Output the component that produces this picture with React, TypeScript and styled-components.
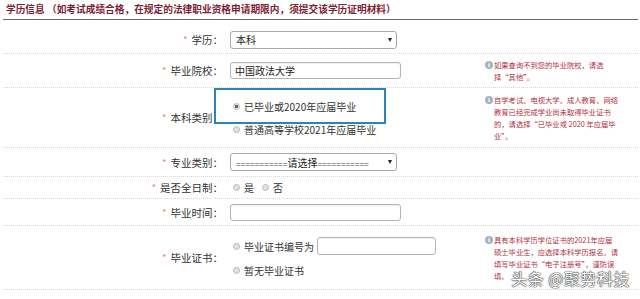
import React from 'react';
import styled, { createGlobalStyle } from 'styled-components';

const GlobalStyle = createGlobalStyle`
  html, body {
    margin: 0;
    padding: 0;
    background: #ffffff;
  }
  body {
    font-family: "Noto Sans CJK SC", "DejaVu Sans", sans-serif;
    color: #333;
  }
`;

const Page = styled.div`
  position: relative;
  width: 640px;
  height: 299px;
  overflow: hidden;
  padding: 0 2px 0 3px;
  box-sizing: border-box;
`;

const Header = styled.div`
  height: 19px;
  border-bottom: 1px solid #6a6a6a;
  padding-left: 3px;
  font-family: "Noto Sans CJK SC", sans-serif;
  font-size: 9.7px;
  font-weight: bold;
  line-height: 19px;
  color: #7b1d34;
  white-space: nowrap;
`;

const Form = styled.div`
  margin-top: 6px;
`;

const Row = styled.div<{ $h: number }>`
  position: relative;
  display: grid;
  grid-template-columns: 220px 245px 1fr;
  grid-template-rows: ${(p) => p.$h - 1}px;
  column-gap: 7px;
  align-items: center;
  height: ${(p) => p.$h}px;
  border-bottom: 1px dotted #d6d6d6;
  box-sizing: border-box;
`;

const Label = styled.div`
  text-align: right;
  font-family: "Noto Sans CJK SC", sans-serif;
  font-size: 10.5px;
  color: #333;
  white-space: nowrap;
`;

const Star = styled.span`
  color: #e58080;
  font-size: 9px;
  margin-right: 4px;
  vertical-align: 1px;
`;

const Field = styled.div`
  display: flex;
  flex-direction: column;
  gap: 8px;
`;

const FakeSelect = styled.div`
  display: flex;
  align-items: center;
  justify-content: space-between;
  width: 167px;
  height: 18px;
  box-sizing: border-box;
  border: 1px solid #a8a8a8;
  border-radius: 3px;
  padding: 0 4px 0 5px;
  font-family: "Noto Sans CJK SC", sans-serif;
  font-size: 10px;
  color: #222;
  background: #fff;
  white-space: nowrap;
`;

const Dashes = styled.span`
  font-family: "Liberation Sans", sans-serif;
  font-size: 8px;
  color: #444;
`;

const Arrow = styled.span`
  width: 0;
  height: 0;
  border-left: 2.5px solid transparent;
  border-right: 2.5px solid transparent;
  border-top: 4px solid #222;
`;

const TextInput = styled.div<{ $w: number; $h?: number }>`
  width: ${(p) => p.$w}px;
  height: ${(p) => p.$h ?? 17}px;
  box-sizing: border-box;
  border: 1px solid #b4b4b4;
  border-radius: 3px;
  box-shadow: inset 0 1px 1px rgba(0, 0, 0, 0.06);
  padding-left: 4px;
  font-family: "Noto Sans CJK SC", sans-serif;
  font-size: 10px;
  line-height: 15px;
  color: #222;
  background: #fff;
`;

const Option = styled.label<{ $front?: boolean }>`
  position: relative;
  z-index: ${(p) => (p.$front ? 2 : 0)};
  display: flex;
  align-items: center;
  gap: 2px;
  padding-left: 3px;
  font-family: "Noto Sans CJK SC", sans-serif;
  font-size: 10px;
  color: #333;
  white-space: nowrap;
`;

const Radio = styled.span<{ $on?: boolean }>`
  display: inline-block;
  width: 7px;
  height: 7px;
  border-radius: 50%;
  box-sizing: border-box;
  border: 1px solid #b9b9b9;
  background: ${(p) => (p.$on ? 'radial-gradient(circle, #666 0 1.5px, #e6e6e6 2px)' : '#e2e2e2')};
  margin-right: 2px;
`;

const Inline = styled.div<{ $gap: number }>`
  display: flex;
  align-items: center;
  gap: ${(p) => p.$gap}px;
`;

const Note = styled.div`
  display: flex;
  align-items: flex-start;
  gap: 1px;
  margin-left: 3px;
  font-family: "Noto Sans CJK SC", sans-serif;
  font-size: 7.3px;
  line-height: 12px;
  color: #b0303f;
  white-space: pre;
`;

const InfoIcon = styled.span`
  flex: none;
  width: 8px;
  height: 8px;
  margin-top: 2px;
  border-radius: 50%;
  background: #9fb3c6;
  color: #fff;
  font-size: 6px;
  font-weight: bold;
  line-height: 8px;
  text-align: center;
  font-family: "DejaVu Serif", serif;
`;

const Highlight = styled.div`
  position: absolute;
  z-index: 1;
  left: 211px;
  top: 0;
  width: 172px;
  height: 36px;
  border: 2px solid #2f82b6;
  background: #fff;
  box-sizing: border-box;
`;

const Watermark = styled.div`
  position: absolute;
  right: 10px;
  bottom: 9px;
  font-family: "Noto Sans CJK SC", sans-serif;
  font-size: 16px;
  color: #fff;
  text-shadow: 0 0 1px #222, 0 0 1px #222, 0 0 2px rgba(0, 0, 0, 0.5);
  letter-spacing: 0.5px;
`;

const Tip: React.FC<{ text: string }> = ({ text }) => (
  <Note>
    <InfoIcon>i</InfoIcon>
    <span>{text}</span>
  </Note>
);

const Req: React.FC<{ text: string }> = ({ text }) => (
  <Label>
    <Star>*</Star>
    {text}
  </Label>
);

export default function App() {
  return (
    <Page>
      <GlobalStyle />
      <Header>学历信息 （如考试成绩合格，在规定的法律职业资格申请期限内，须提交该学历证明材料）</Header>
      <Form>
        <Row $h={28}>
          <Req text="学历：" />
          <Field>
            <FakeSelect>
              <span>本科</span>
              <Arrow />
            </FakeSelect>
          </Field>
          <div />
        </Row>
        <Row $h={34}>
          <Req text="毕业院校：" />
          <Field>
            <TextInput $w={171}>中国政法大学</TextInput>
          </Field>
          <Tip text={'如果查询不到您的毕业院校，请选\n择“其他”。'} />
        </Row>
        <Row $h={60}>
          <Req text="本科类别：" />
          <Field>
            <Option $front>
              <Radio $on />
              已毕业或2020年应届毕业
            </Option>
            <Option>
              <Radio />
              普通高等学校2021年应届毕业
            </Option>
          </Field>
          <Tip text={'自学考试、电视大学、成人教育、网络\n教育已经完成学业尚未取得毕业证书\n的，请选择“已毕业或 2020 年应届毕\n业”。'} />
          <Highlight />
        </Row>
        <Row $h={29}>
          <Req text="专业类别：" />
          <Field>
            <FakeSelect>
              <span>
                <Dashes>===========</Dashes>请选择<Dashes>===========</Dashes>
              </span>
              <Arrow />
            </FakeSelect>
          </Field>
          <div />
        </Row>
        <Row $h={22}>
          <Req text="是否全日制：" />
          <Inline $gap={5}>
            <Option>
              <Radio />是
            </Option>
            <Option>
              <Radio />否
            </Option>
          </Inline>
          <div />
        </Row>
        <Row $h={27}>
          <Req text="毕业时间：" />
          <Field>
            <TextInput $w={171} />
          </Field>
          <div />
        </Row>
        <Row $h={64}>
          <Req text="毕业证书：" />
          <Field>
            <Inline $gap={3}>
              <Option>
                <Radio />
                毕业证书编号为
              </Option>
              <TextInput $w={119} $h={18} />
            </Inline>
            <Option>
              <Radio />
              暂无毕业证书
            </Option>
          </Field>
          <Tip text={'具有本科学历学位证书的2021年应届\n硕士毕业生，应选择本科学历报名。请\n填写毕业证书“电子注册号”，谨防误\n填。'} />
        </Row>
      </Form>
      <Watermark>头条 @聚势科技</Watermark>
    </Page>
  );
}
